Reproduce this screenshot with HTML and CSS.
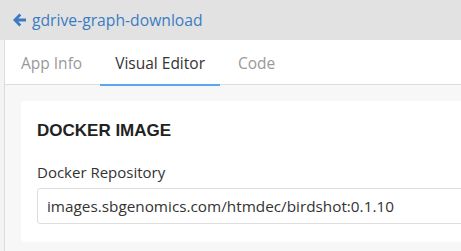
FILE: index.html
```html
<!DOCTYPE html>
<html>
<head>
<meta charset="UTF-8">
<title>gdrive-graph-download</title>
<link rel="stylesheet" href="styles.css">
</head>
<body>

<div class="topbar">
	<a class="back" href="#">
		<svg width="13" height="14" viewBox="0 0 13 14"><path fill="currentColor" d="M6.3 0.6l2 2-3 3H13v2.8H5.3l3 3-2 2L0 7z"/></svg>
		gdrive-graph-download
	</a>
</div>

<div class="main">
	<div class="tabs">
		<div class="tab">App Info</div>
		<div class="tab active">Visual Editor</div>
		<div class="tab">Code</div>
	</div>
	<div class="content">
		<div class="card">
			<h3>DOCKER IMAGE</h3>
			<label class="label">Docker Repository</label>
			<input class="field" type="text" value="images.sbgenomics.com/htmdec/birdshot:0.1.10" />
		</div>
	</div>
</div>

</body>
</html>
```

FILE: styles.css
```css
body {
	margin: 0;
	background-color: #f3f3f3;
	font-family: "Open Sans", sans-serif;
	overflow: hidden;
}
.topbar {
	height: 40px;
	background-color: #e2e2e2;
	display: flex;
	align-items: center;
	padding-left: 13px;
}
.back {
	color: #3a7cc2;
	text-decoration: none;
	font-size: 15.7px;
	display: flex;
	align-items: center;
	gap: 6px;
}
.main {
	margin-left: 4px;
	border-left: 1px solid #dddddd;
	height: 211px;
	background-color: #f7f7f7;
}
.tabs {
	display: flex;
	height: 44px;
	background-color: #ffffff;
	border-bottom: 1px solid #dddddd;
	padding-left: 1px;
	gap: 3px;
}
.tab {
	padding: 2px 15px 0;
	font-size: 15.5px;
	color: #999999;
	line-height: 42px;
}
.tab.active {
	color: #333333;
	border-bottom: 2px solid #5aa7ee;
	height: 42px;
}
.content {
	padding: 16px 0 0 16px;
}
.card {
	background-color: #ffffff;
	border-radius: 3px 0 0 3px;
	padding: 20px 0 18px 16px;
}
h3 {
	margin: 0;
	font-family: "Liberation Sans", sans-serif;
	font-weight: bold;
	font-size: 17px;
	line-height: 20px;
	color: #222222;
}
.label {
	display: block;
	margin-top: 20px;
	font-size: 15px;
	line-height: 22px;
	color: #333333;
}
.field {
	display: block;
	box-sizing: border-box;
	margin-top: 5px;
	width: 440px;
	height: 36px;
	border: 1px solid #dddddd;
	border-radius: 3px;
	padding: 0 9px;
	font-family: "Open Sans", sans-serif;
	font-size: 15.3px;
	color: #333333;
}
```
